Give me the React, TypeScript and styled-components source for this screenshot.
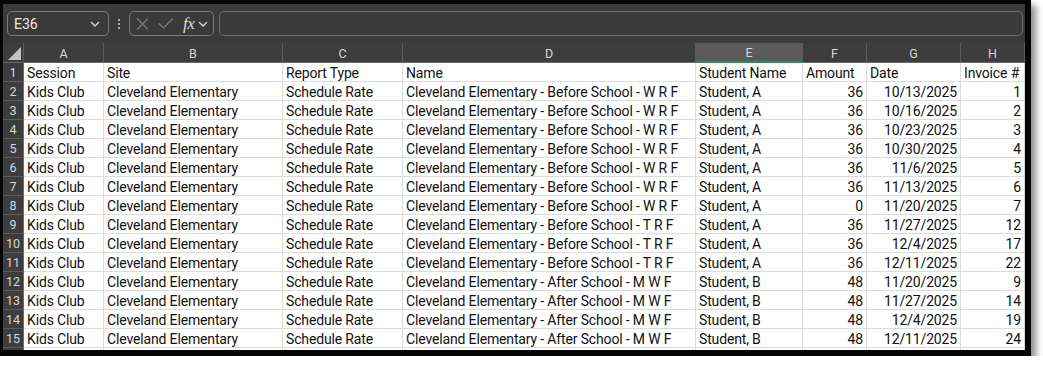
import React from "react";
import styled, { createGlobalStyle } from "styled-components";

const GlobalStyle = createGlobalStyle`
  html, body { margin: 0; padding: 0; background: #ffffff; }
  body { font-family: Roboto, "Liberation Sans", Arial, sans-serif; }
  * { box-sizing: border-box; }
`;

const Frame = styled.div`
  width: 1031px;
  height: 356px;
  border-style: solid;
  border-color: #050505;
  border-width: 4px 6px 6px 3px;
  background: #3a3a3a;
  box-shadow: 5px 5px 7px rgba(0, 0, 0, 0.45);
  display: flex;
  flex-direction: column;
  overflow: hidden;
`;

const Toolbar = styled.div`
  height: 39px;
  flex: none;
  display: flex;
  align-items: flex-start;
  padding: 7px 2px 0 4px;
  background: #3a3a3a;
`;

const BoxBase = styled.div`
  height: 25px;
  border: 1px solid #7a7a7a;
  border-radius: 5px;
  display: flex;
  align-items: center;
  color: #e6e6e6;
`;

const NameBox = styled(BoxBase)`
  width: 102px;
  padding: 0 8px 0 6px;
  justify-content: space-between;
  font-size: 14px;
`;

const Kebab = styled.div`
  width: 20px;
  height: 25px;
  display: flex;
  flex-direction: column;
  align-items: center;
  justify-content: center;
  gap: 2px;
  & > span {
    width: 2px;
    height: 2px;
    background: #d0d0d0;
    border-radius: 1px;
  }
`;

const FormulaGroup = styled(BoxBase)`
  width: 85px;
  padding: 0 2px 0 6px;
`;

const Spacer = styled.span<{ $w: number }>`
  width: ${(p) => p.$w}px;
  flex: none;
`;

const Fx = styled.span`
  font-family: "Liberation Serif", "DejaVu Serif", serif;
  font-style: italic;
  font-size: 17px;
  color: #dadada;
  margin-left: 9px;
  margin-right: 4px;
  letter-spacing: -0.5px;
`;

const FormulaInput = styled(BoxBase)`
  flex: 1;
  margin-left: 5px;
  border-color: #707070;
`;

const Sheet = styled.div`
  flex: 1;
  overflow: hidden;
  background: #ffffff;
`;

const Grid = styled.div`
  display: grid;
  grid-template-columns: 21px 80px 179px 120px 293px 107px 64px 94px 64px;
  grid-template-rows: 20px;
  grid-auto-rows: 19px;
  width: max-content;
`;

const Corner = styled.div`
  background: #3d3d3d;
  border-right: 1px solid #5c5c5c;
  border-bottom: 1px solid #6a6a6a;
  display: flex;
  align-items: flex-end;
  justify-content: flex-end;
  padding: 0 2px 2px 0;
`;

const ColHead = styled.div<{ $active?: boolean }>`
  background: ${(p) => (p.$active ? "#5b5b5b" : "#3d3d3d")};
  border-right: 1px solid #5c5c5c;
  border-bottom: ${(p) => (p.$active ? "2px solid #2c8c53" : "1px solid #6a6a6a")};
  color: #d6d6d6;
  font-size: 12.5px;
  display: flex;
  align-items: center;
  justify-content: center;
  padding-top: 1px;
`;

const RowHead = styled.div`
  background: #3d3d3d;
  border-right: 1px solid #6a6a6a;
  border-bottom: 1px solid #5c5c5c;
  color: #d6d6d6;
  font-size: 12.5px;
  display: flex;
  align-items: center;
  justify-content: center;
  padding-top: 1px;
`;

const Cell = styled.div<{ $num?: boolean }>`
  border-right: 1px solid #dcdcdc;
  border-bottom: 1px solid #dcdcdc;
  font-size: 14px;
  letter-spacing: -0.15px;
  line-height: 18px;
  padding: 1px 3px 0 3px;
  color: #111111;
  white-space: nowrap;
  overflow: hidden;
  text-align: ${(p) => (p.$num ? "right" : "left")};
`;

const Chevron = () => (
  <svg width="10" height="6" viewBox="0 0 10 6" fill="none">
    <path d="M1 1 L5 5 L9 1" stroke="#d8d8d8" strokeWidth="1.3" />
  </svg>
);

const XIcon = () => (
  <svg width="13" height="12" viewBox="0 0 13 12" fill="none">
    <path d="M1 0.5 L12 11.5 M12 0.5 L1 11.5" stroke="#7c7c7c" strokeWidth="1.2" />
  </svg>
);

const CheckIcon = () => (
  <svg width="16" height="11" viewBox="0 0 16 11" fill="none">
    <path d="M1 5.5 L5.5 10 L15 0.5" stroke="#7c7c7c" strokeWidth="1.2" />
  </svg>
);

const SelectAll = () => (
  <svg width="13" height="13" viewBox="0 0 13 13">
    <polygon points="13,0 13,13 0,13" fill="#c4c4c4" />
  </svg>
);

const cols = ["A", "B", "C", "D", "E", "F", "G", "H"];
const numericCols = new Set([5, 6, 7]);

type Row = string[];
const before = "Cleveland Elementary - Before School - ";
const after = "Cleveland Elementary - After School - M W F";
const base = ["Kids Club", "Cleveland Elementary", "Schedule Rate"];

const rows: Row[] = [
  ["Session", "Site", "Report Type", "Name", "Student Name", "Amount", "Date", "Invoice #"],
  [...base, before + "W R F", "Student, A", "36", "10/13/2025", "1"],
  [...base, before + "W R F", "Student, A", "36", "10/16/2025", "2"],
  [...base, before + "W R F", "Student, A", "36", "10/23/2025", "3"],
  [...base, before + "W R F", "Student, A", "36", "10/30/2025", "4"],
  [...base, before + "W R F", "Student, A", "36", "11/6/2025", "5"],
  [...base, before + "W R F", "Student, A", "36", "11/13/2025", "6"],
  [...base, before + "W R F", "Student, A", "0", "11/20/2025", "7"],
  [...base, before + "T R F", "Student, A", "36", "11/27/2025", "12"],
  [...base, before + "T R F", "Student, A", "36", "12/4/2025", "17"],
  [...base, before + "T R F", "Student, A", "36", "12/11/2025", "22"],
  [...base, after, "Student, B", "48", "11/20/2025", "9"],
  [...base, after, "Student, B", "48", "11/27/2025", "14"],
  [...base, after, "Student, B", "48", "12/4/2025", "19"],
  [...base, after, "Student, B", "48", "12/11/2025", "24"],
];

export default function App() {
  return (
    <>
      <GlobalStyle />
      <Frame>
        <Toolbar>
          <NameBox>
            <span>E36</span>
            <Chevron />
          </NameBox>
          <Kebab>
            <span />
            <span />
            <span />
          </Kebab>
          <FormulaGroup>
            <XIcon />
            <Spacer $w={9} />
            <CheckIcon />
            <Fx>fx</Fx>
            <Chevron />
          </FormulaGroup>
          <FormulaInput />
        </Toolbar>
        <Sheet>
          <Grid>
            <Corner>
              <SelectAll />
            </Corner>
            {cols.map((c) => (
              <ColHead key={c} $active={c === "E"}>
                {c}
              </ColHead>
            ))}
            {rows.map((r, i) => (
              <React.Fragment key={i}>
                <RowHead>{i + 1}</RowHead>
                {r.map((v, j) => (
                  <Cell key={j} $num={i > 0 && numericCols.has(j)}>
                    {v}
                  </Cell>
                ))}
              </React.Fragment>
            ))}
            <RowHead />
            {cols.map((c) => (
              <Cell key={"p" + c} />
            ))}
          </Grid>
        </Sheet>
      </Frame>
    </>
  );
}
